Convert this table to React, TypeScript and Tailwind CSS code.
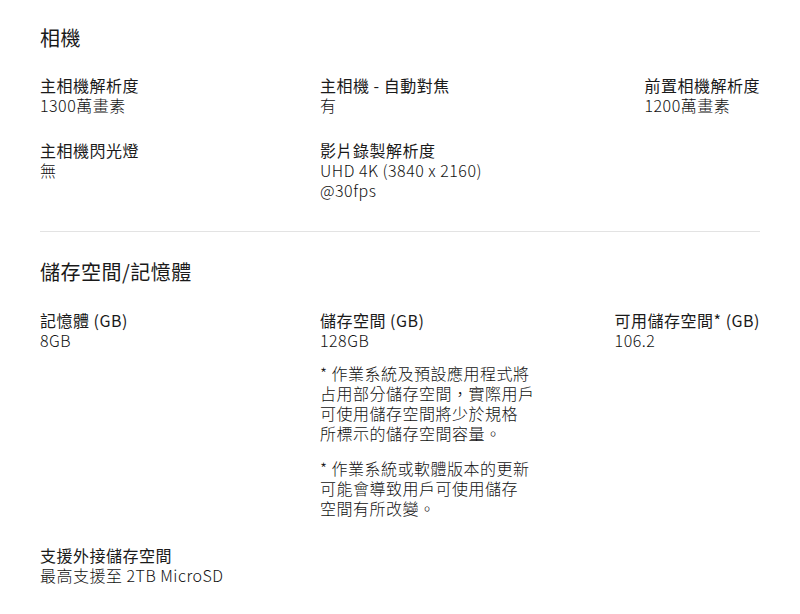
import React from "react";

const font = { fontFamily: '"Noto Sans CJK TC", "Noto Sans", sans-serif' };

function Item({ label, children, className = "" }: { label: string; children: React.ReactNode; className?: string }) {
  return (
    <div className={className}>
      <div className="font-normal text-[#1a1a1a]">{label}</div>
      <div className="font-light text-[#111111]">{children}</div>
    </div>
  );
}

export default function App() {
  return (
    <div className="bg-white w-[800px] h-[614px] overflow-hidden px-10 pt-6 text-[16px] leading-[20px] tracking-[0.5px]" style={font}>
      <section className="pb-[31px] border-b border-[#e3e3e3]">
        <h2 className="text-[20px] leading-[28px] font-normal text-[#1a1a1a] mb-[23px]">相機</h2>
        <div className="grid grid-cols-[280px_1fr_auto] gap-y-[25px]">
          <Item label="主相機解析度">1300萬畫素</Item>
          <Item label="主相機 - 自動對焦">有</Item>
          <Item label="前置相機解析度" className="justify-self-end">1200萬畫素</Item>
          <Item label="主相機閃光燈">無</Item>
          <Item label="影片錄製解析度">
            UHD 4K (3840 x 2160)
            <br />
            @30fps
          </Item>
          <div />
        </div>
      </section>
      <section className="pt-[26px]">
        <h2 className="text-[20px] leading-[28px] font-normal text-[#1a1a1a] mb-[24px]">儲存空間/記憶體</h2>
        <div className="grid grid-cols-[280px_1fr_auto] gap-y-[27px]">
          <Item label="記憶體 (GB)">8GB</Item>
          <div>
            <Item label="儲存空間 (GB)">128GB</Item>
            <div className="font-light text-[#111111] mt-[13px]">
              * 作業系統及預設應用程式將
              <br />
              占用部分儲存空間，實際用戶
              <br />
              可使用儲存空間將少於規格
              <br />
              所標示的儲存空間容量。
            </div>
            <div className="font-light text-[#111111] mt-[15px]">
              * 作業系統或軟體版本的更新
              <br />
              可能會導致用戶可使用儲存
              <br />
              空間有所改變。
            </div>
          </div>
          <Item label="可用儲存空間* (GB)" className="justify-self-end">106.2</Item>
          <Item label="支援外接儲存空間">最高支援至 2TB MicroSD</Item>
        </div>
      </section>
    </div>
  );
}
